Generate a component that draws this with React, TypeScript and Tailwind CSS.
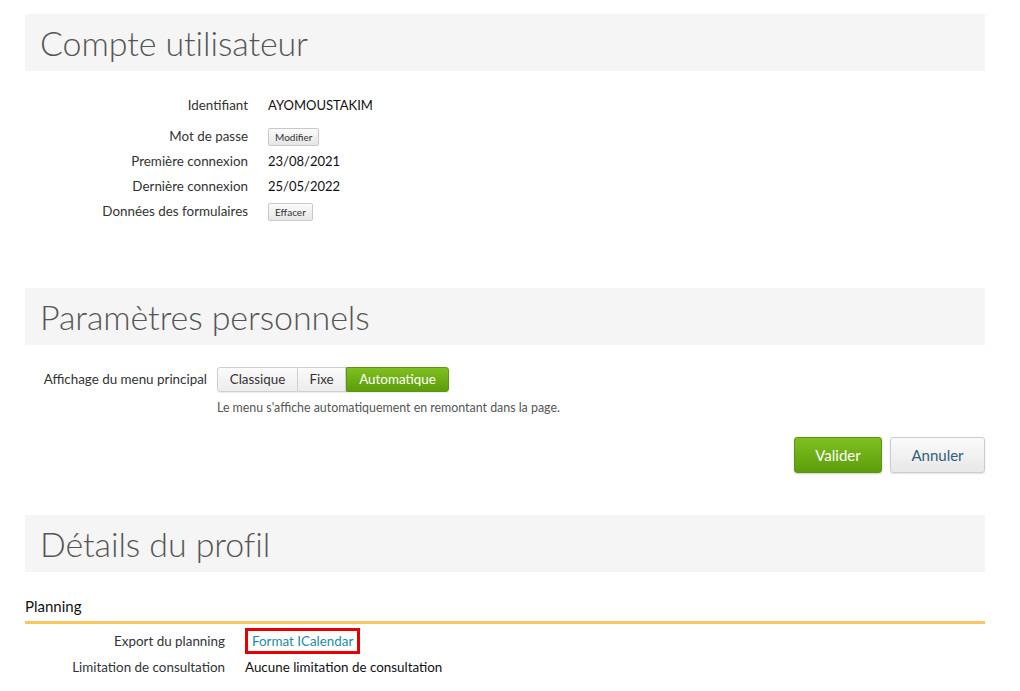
import React from "react";

const font = { fontFamily: "Lato, 'Open Sans', sans-serif" };

function Header({ title }: { title: string }) {
  return (
    <div className="h-[57px] bg-[#f5f5f5] pl-[15px] flex items-center">
      <h2 className="text-[34px] font-light text-[#555] leading-none tracking-[-0.1px]">{title}</h2>
    </div>
  );
}

function SmallBtn({ children }: { children: React.ReactNode }) {
  return (
    <button className="h-[18px] px-[6px] text-[10px] text-[#333] border border-[#c9c9c9] rounded-[2px] bg-gradient-to-b from-[#fbfbfb] to-[#e6e6e6] leading-none">
      {children}
    </button>
  );
}

function Row({ label, children, className = "" }: { label: string; children: React.ReactNode; className?: string }) {
  return (
    <div className={"flex items-center h-[25px] " + className}>
      <div className="w-[223px] text-right text-[13.4px] text-[#333]">{label}</div>
      <div className="ml-[20px] text-[13px] text-[#111] flex items-center">{children}</div>
    </div>
  );
}

export default function App() {
  return (
    <div className="w-[1020px] h-[691px] bg-white overflow-hidden" style={font}>
      <div className="ml-[25px] w-[960px] pt-[14px]">
        <Header title="Compte utilisateur" />
        <div className="mt-[22px]">
          <Row label="Identifiant" className="mb-[6px]">AYOMOUSTAKIM</Row>
          <Row label="Mot de passe"><SmallBtn>Modifier</SmallBtn></Row>
          <Row label="Première connexion">23/08/2021</Row>
          <Row label="Dernière connexion">25/05/2022</Row>
          <Row label="Données des formulaires"><SmallBtn>Effacer</SmallBtn></Row>
        </div>

        <div className="mt-[64px]">
          <Header title="Paramètres personnels" />
        </div>
        <div className="mt-[22px] flex items-center">
          <div className="w-[182px] text-right text-[13.4px] text-[#333]">Affichage du menu principal</div>
          <div className="ml-[10px] flex h-[25px] rounded-[3px] shadow-[0_1px_1px_rgba(0,0,0,0.08)]">
            <button className="w-[81px] h-full text-[13.4px] text-[#333] border border-[#cfcfcf] rounded-l-[3px] bg-gradient-to-b from-[#fbfbfb] to-[#ececec]">Classique</button>
            <button className="w-[48px] h-full text-[13.4px] text-[#333] border-y border-r border-[#cfcfcf] bg-gradient-to-b from-[#fbfbfb] to-[#ececec]">Fixe</button>
            <button className="w-[103px] h-full text-[13.4px] text-white border border-[#5a960e] rounded-r-[3px] bg-gradient-to-b from-[#7fc01f] to-[#5c9d0c]">Automatique</button>
          </div>
        </div>
        <div className="ml-[192px] mt-[7px] text-[12.4px] leading-[18px] text-[#555]">Le menu s'affiche automatiquement en remontant dans la page.</div>

        <div className="mt-[20px] flex justify-end gap-[8px]">
          <button className="w-[88px] h-[36px] text-[15px] text-white rounded-[3px] border border-[#5a960e] bg-gradient-to-b from-[#7fc01f] to-[#5c9d0c] shadow-[0_1px_2px_rgba(0,0,0,0.2)]">Valider</button>
          <button className="w-[95px] h-[36px] text-[15px] text-[#2e5f78] rounded-[3px] border border-[#c3cfd4] bg-gradient-to-b from-[#fafafa] to-[#e8e8e8] shadow-[0_1px_2px_rgba(0,0,0,0.12)]">Annuler</button>
        </div>

        <div className="mt-[42px]">
          <Header title="Détails du profil" />
        </div>
        <div className="mt-[24px] text-[15px] text-[#111] leading-[20px]">Planning</div>
        <div className="mt-[5px] h-[3px] bg-[#fbc65c]" />
        <div className="mt-[4px]">
          <div className="flex items-center h-[26px]">
            <div className="w-[200px] text-right text-[13.4px] text-[#333]">Export du planning</div>
            <div className="ml-[20px] h-[26px] px-[4px] border-[3px] border-[#e60000] flex items-center">
              <span className="text-[13.4px] text-[#1b8ea6]">Format ICalendar</span>
            </div>
          </div>
          <div className="flex items-center h-[26px]">
            <div className="w-[200px] text-right text-[13.4px] text-[#333]">Limitation de consultation</div>
            <div className="ml-[20px] text-[13.4px] text-[#111]">Aucune limitation de consultation</div>
          </div>
        </div>
      </div>
    </div>
  );
}
